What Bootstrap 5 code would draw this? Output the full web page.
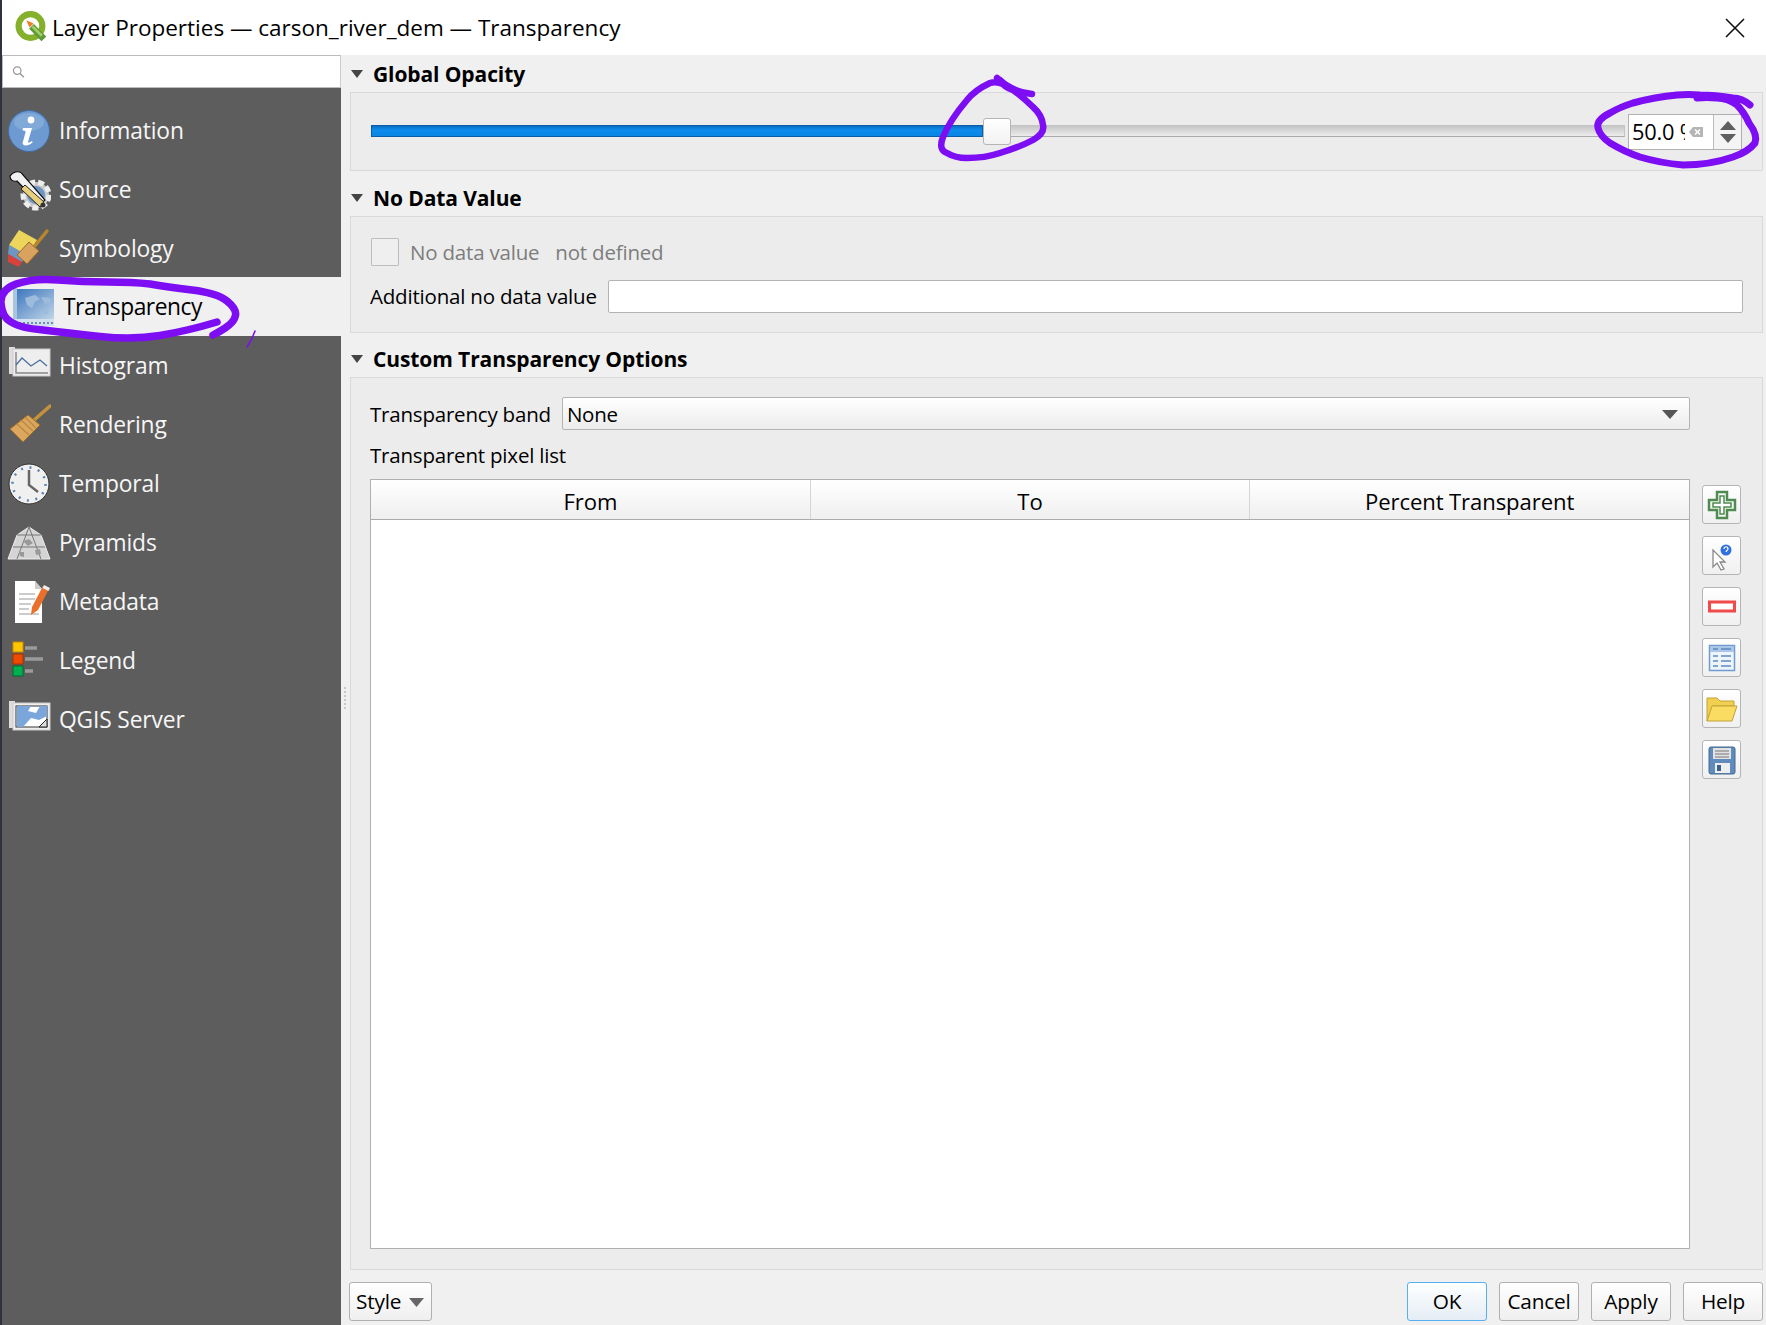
<!DOCTYPE html>
<html lang="en"><head><meta charset="utf-8"><title>Layer Properties</title>
<link href="https://cdn.jsdelivr.net/npm/bootstrap@5.3.0/dist/css/bootstrap.min.css" rel="stylesheet">
<style>
html,body{height:100%}
body{width:1766px;height:1325px;overflow:hidden;background:#f0f0f0;font-family:"Open Sans","Noto Sans",sans-serif;font-size:20.5px;letter-spacing:-.2px;color:#000;position:relative}
.titlebar{height:55px;background:#fff;border-left:2px solid #2f3340;padding-left:13px;flex:none}
.titletext{margin-left:4px;font-size:22.5px;letter-spacing:0;white-space:nowrap}
.main-area{flex:1;min-height:0;border-left:2px solid #2f3340}
.sidebar{width:339px;flex:none;background:#5d5d5d}
.searchbox{height:33px;background:#fff;border:1px solid #bbb;border-right-color:#ccc;padding-left:9px;flex:none}
.searchbox input{border:0;outline:0;padding:0;height:30px;box-shadow:none;background:transparent}
.navlist{padding-top:13px;border-radius:0}
.navlist .list-group-item{height:59px;background:transparent;border:0;border-radius:0;color:#f6f6f6;padding:2px 0 0 5px;display:flex;align-items:center;font-size:22.8px;letter-spacing:-.15px}
.navlist .list-group-item svg{flex:none;margin-right:8px;margin-top:-2px}
.navlist .list-group-item.active{background:#f0f0f0;color:#000;padding-left:9px;letter-spacing:-.45px}
.navlist .list-group-item.active svg{margin-right:8px}
.panel{flex:1;min-width:0;padding:1px 3px 4px 9px;position:relative}
.splitdots{position:absolute;left:3px;top:632px;width:2px;height:24px;background:repeating-linear-gradient(#c8c8c8 0 2px,transparent 2px 4px)}
.sechead{height:36px;font-weight:700;font-size:21px;letter-spacing:-.1px;flex:none;padding-top:2px}
.sechead svg{margin-right:10px;margin-left:1px;margin-top:-2px}
.gbox{background:#ececec;border:1px solid #d9d9d9;flex:none}
.box-opacity{height:79px;padding:0 20px;margin-bottom:9px}
.box-nodata{height:117px;padding:21px 19px 19px;margin-bottom:8px}
.box-custom{flex:1;min-height:0;padding:19px 19px 20px;margin-bottom:12px}
.fill{width:612px;height:12px;background:linear-gradient(#0a6fc4,#0c8cec 40%,#0a86e4);border:1px solid #0a5ea8;flex:none;margin-top:-2px}
.knob{width:28px;height:27px;background:linear-gradient(#fff,#f2f2f2);border:1px solid #b5b5b5;border-radius:3px;flex:none}
.rest{flex:1;height:12px;background:linear-gradient(#c6c6c6,#ececec);border:1px solid #c4c4c4;border-bottom-color:#aaa;border-left:0;margin-right:3px;margin-top:-2px}
.spin{width:114px;height:36px;background:#fff;border:1px solid #b0b0b0;flex:none}
.spin-val{width:53px;margin-left:3px;padding-top:2px;overflow:hidden;white-space:nowrap;font-size:21.8px;letter-spacing:-.2px}
.spin-arrows{width:28px;height:100%;border-left:1px solid #bbb;background:#f4f4f4;margin-left:auto}
.ck{width:28px;height:28px;margin:0 11px 0 1px;background:#efefef;border:1px solid #bdbdbd;border-radius:1px;flex:none}
.disabled-text{color:#7d7d7d}
.r-nodata{height:28px;gap:0}
.r-add{margin-top:14px;height:33px}
.lift{padding-top:1px}
.lineinput{flex:1;height:33px;border:1px solid #b4b4b4;border-radius:2px;background:#fff;box-shadow:none;padding:0 4px;margin-left:11px}
.r-add span{margin-top:-2px}
.r-band{height:33px;width:1320px}
.combo{flex:1;height:33px;border:1px solid #b4b4b4;border-radius:2px;background:linear-gradient(#fff,#ececec);padding:1px 11px 0 4px;margin-left:11px}
.listlabel{height:32px;margin:8px 0 9px;padding-top:2px}
.tblframe{width:1320px;flex:none;background:#fff;border:1px solid #b0b0b0}
.tblframe table{table-layout:fixed;margin:0;--bs-table-bg:transparent}
.tblframe th{height:39px;padding:5px 0 0;text-align:center;vertical-align:middle;font-weight:400;background:linear-gradient(#fff,#efefef);border:0;border-right:1px solid #d5d5d5;border-bottom:1px solid #aaa;color:#000;font-size:22.1px;letter-spacing:-.1px}
.tblframe th:last-child{border-right:0}
.tools{width:40px;margin-left:12px;margin-top:6px;flex:none;gap:12px}
.toolbtn{width:39px;height:39px;padding:0;background:linear-gradient(#fff,#f0f0f0);border:1px solid #b5b5b5;border-radius:3px;display:flex;align-items:center;justify-content:center}
.dlgbtn{width:80px;height:39px;padding:1px 0 0;font-size:20.8px;letter-spacing:-.2px;color:#000;background:linear-gradient(#fff,#efefef);border:1px solid #b0b0b0;border-radius:3px}
.dlgbtn.okbtn{border-color:#55aff0;background:linear-gradient(#fff,#e4edf5)}
.dlgbtn.stylebtn{width:83px;text-align:left;padding-left:6px;gap:8px;margin-left:-1px}
.btnrow{height:39px;flex:none;gap:12px}
.ink{position:absolute;left:0;top:0;pointer-events:none;z-index:5}
</style></head>
<body class="d-flex flex-column">
<div class="titlebar d-flex align-items-center">
<svg width="33" height="33" viewBox="0 0 32 32"><circle cx="15" cy="14.500" r="11.500" fill="none" stroke="#84b02c" stroke-width="6"/><path d="M16 15l12 12" stroke="#5f9a3a" stroke-width="6.500"/><path d="M17 15l9 9" stroke="#a4d062" stroke-width="2.500"/><path d="M11 9l7 3-4 4z" fill="#ef7d22"/></svg>
<span class="titletext">Layer Properties — carson_river_dem — Transparency</span>
<svg class="ms-auto" style="margin-right:21px" width="20" height="20" viewBox="0 0 20 20"><path d="M1 1l18 18M19 1L1 19" stroke="#111" stroke-width="1.6"/></svg>
</div>
<div class="main-area d-flex">
<div class="sidebar d-flex flex-column">
<div class="searchbox d-flex align-items-center gap-1">
<svg width="14" height="14" viewBox="0 0 14 14"><circle cx="5.5" cy="5.5" r="4" fill="none" stroke="#999" stroke-width="1.3"/><path d="M8.5 8.5l4 4" stroke="#999" stroke-width="1.6"/></svg>
<input class="form-control" type="text" aria-label="Search">
</div>
<div class="list-group navlist">
<div class="list-group-item">
<svg width="44" height="44" viewBox="0 0 44 44"><circle cx="22" cy="22" r="20.5" fill="#6d9bd1" stroke="#3f6ea8"/><ellipse cx="22" cy="13" rx="15" ry="9" fill="#8fb4de" opacity=".6"/><circle cx="24" cy="11" r="3.4" fill="#fff"/><path d="M16 19h9l-4 14c0 1 1 1 4-1l.6 1.500c-4 3.500-10 4-10 .5l3-11c0-1-1-1.500-3-1.500z" fill="#fff"/></svg>
Information</div>
<div class="list-group-item">
<svg width="44" height="44" viewBox="0 0 44 44"><circle cx="29" cy="27" r="13" fill="#c9c9c9" stroke="#eee" stroke-width="5" stroke-dasharray="6 3"/><circle cx="29" cy="27" r="9" fill="#6d96c4"/><path d="M3 8c5-6 11-5 13-1l22 25-5 5L10 13C6 14 3 12 3 8z" fill="#f1f1f1" stroke="#111" stroke-width="1.2"/><path d="M18 17l19 17-4 5-19-18z" fill="#e8cf79" stroke="#222"/><circle cx="36" cy="37" r="2.500" fill="#333"/></svg>
Source</div>
<div class="list-group-item">
<svg width="44" height="44" viewBox="0 0 44 44"><path d="M2 18L12 3l18 10-10 16z" fill="#edd45a"/><path d="M2 18l18 10-5 7L1 27z" fill="#6d96c4"/><path d="M1 27l14 8-3 5L1 35z" fill="#d8423a"/><path d="M27 20L40 4" stroke="#b8862d" stroke-width="3.500" stroke-linecap="round"/><path d="M10 28l12-13 10 9-12 13z" fill="#d9a25f" stroke="#9a6a27"/></svg>
Symbology</div>
<div class="list-group-item active">
<svg width="44" height="44" viewBox="0 0 44 44"><defs><linearGradient id="mapfade" x1="0" y1="0" x2="1" y2="1"><stop offset="0" stop-color="#3a74bd"/><stop offset="1" stop-color="#c0d5e8"/></linearGradient></defs><rect x="4" y="4" width="39" height="30" fill="url(#mapfade)"/><path d="M2 3h4v33H2z" fill="#a9c4dd"/><path d="M14 13l10-3 5 4-5 3-3 6-5-3zM30 12l9 1 1 5-6 1zM32 25l6 1-2 4-4-2z" fill="#9dbcdc"/><rect x="2" y="34" width="41" height="7" fill="#d3e1ee"/><path d="M4 38h39" stroke="#6f8faf" stroke-width="2" stroke-dasharray="2 2"/></svg>
Transparency</div>
<div class="list-group-item">
<svg width="44" height="44" viewBox="0 0 44 44"><path d="M2 3h6v27H2z" fill="#ddd"/><rect x="6" y="5" width="37" height="27" fill="#eee" stroke="#ccc"/><path d="M9 8v21h32" fill="none" stroke="#888" stroke-width="1.500"/><path d="M9 21l6-7 9 8 9-6 7 6" fill="none" stroke="#4a6f9e" stroke-width="1.300"/></svg>
Histogram</div>
<div class="list-group-item">
<svg width="44" height="44" viewBox="0 0 44 44"><path d="M26 18L43 3" stroke="#c5913a" stroke-width="3.500" stroke-linecap="round"/><path d="M3 26l18-14 12 10-17 17z" fill="#dba75f" stroke="#a16f23"/><path d="M10 21l12 11M14 17l12 11M18 14l11 11" stroke="#b98741" stroke-width="1.200"/></svg>
Rendering</div>
<div class="list-group-item">
<svg width="44" height="44" viewBox="0 0 44 44"><circle cx="22" cy="22" r="20" fill="#f0f0f0" stroke="#333" stroke-width="1"/><circle cx="22" cy="22" r="16.500" fill="none" stroke="#5a82b5" stroke-width="2.500" stroke-dasharray="2 6.640"/><path d="M22 8v15l9 7" fill="none" stroke="#666" stroke-width="2.500"/></svg>
Temporal</div>
<div class="list-group-item">
<svg width="44" height="44" viewBox="0 0 44 44"><path d="M1 38L10 14 22 6l12 8 9 24z" fill="#d4d4d4" stroke="#eee"/><path d="M22 6L10 38M22 6l12 32M10 14h24M6 26h32" stroke="#777" stroke-width="1" fill="none"/><path d="M16 20l6-2 4 4-5 3zM12 31l5 0 0 5-4-1zM28 29l5-1 1 5-5 1z" fill="#999"/></svg>
Pyramids</div>
<div class="list-group-item">
<svg width="44" height="44" viewBox="0 0 44 44"><path d="M8 1h20l7 8v34H8z" fill="#fff"/><path d="M28 1l7 8h-7z" fill="#ccc"/><path d="M12 14h16M12 19h16M12 24h12M12 29h10M12 34h20" stroke="#999" stroke-width="1.200"/><path d="M36 6l6 3-11 21-7 5 1-8z" fill="#e8702a"/><path d="M37 5l6 3-1.500 3-6-3z" fill="#eee"/></svg>
Metadata</div>
<div class="list-group-item">
<svg width="44" height="44" viewBox="0 0 44 44"><rect x="6" y="3" width="10" height="10" fill="#ffc600" stroke="#c98a00"/><rect x="6" y="15" width="10" height="10" fill="#f04a00" stroke="#a83000"/><rect x="6" y="27" width="10" height="10" fill="#00b050" stroke="#006b30"/><path d="M18 9h12M18 20h18M18 32h8" stroke="#9a9a9a" stroke-width="3.500"/></svg>
Legend</div>
<div class="list-group-item">
<svg width="44" height="44" viewBox="0 0 44 44"><path d="M2 3h6v27H2z" fill="#ddd"/><rect x="6" y="5" width="37" height="27" fill="#eee" stroke="#ccc"/><rect x="9" y="8" width="31" height="21" fill="#fff" stroke="#333" stroke-width="1"/><path d="M10 8h14l-3 5 8 2 4-7h7v10l-8 4-8-2-8 9h-6z" fill="#7ba6dc"/><path d="M32 29l8-8v8z" fill="#ddd" stroke="#222"/></svg>
QGIS Server</div>
</div>
</div>
<div class="panel d-flex flex-column">
<div class="splitdots"></div>
<div class="sechead d-flex align-items-center"><svg width="12" height="8" viewBox="0 0 12 8"><path d="M0 0h12L6 8z" fill="#444"/></svg>Global Opacity</div>
<div class="gbox box-opacity d-flex align-items-center">
<div class="fill"></div><div class="knob"></div><div class="rest"></div>
<div class="spin d-flex align-items-center">
<span class="spin-val">50.0 %</span>
<svg width="14" height="12" viewBox="0 0 14 12" class="ms-1"><path d="M0 6l4-5h10v10H4z" fill="#b5b5b5"/><path d="M6 3.500l5 5M11 3.500l-5 5" stroke="#fff" stroke-width="1.500"/></svg>
<div class="spin-arrows d-flex flex-column align-items-center justify-content-center gap-1">
<svg width="16" height="9" viewBox="0 0 16 9"><path d="M8 0l8 9H0z" fill="#5f5f5f"/></svg>
<svg width="16" height="9" viewBox="0 0 16 9"><path d="M0 0h16L8 9z" fill="#5f5f5f"/></svg>
</div></div></div>
<div class="sechead d-flex align-items-center"><svg width="12" height="8" viewBox="0 0 12 8"><path d="M0 0h12L6 8z" fill="#444"/></svg>No Data Value</div>
<div class="gbox box-nodata">
<div class="r-nodata d-flex align-items-center disabled-text"><span class="ck"></span><span class="lift">No data value</span><span class="ms-3 lift">not defined</span></div>
<div class="r-add d-flex align-items-center"><span class="lift">Additional no data value</span><input class="form-control lineinput" type="text" aria-label="Additional no data value"></div>
</div>
<div class="sechead d-flex align-items-center"><svg width="12" height="8" viewBox="0 0 12 8"><path d="M0 0h12L6 8z" fill="#444"/></svg>Custom Transparency Options</div>
<div class="gbox box-custom d-flex flex-column">
<div class="r-band d-flex align-items-center"><span class="lift">Transparency band</span><div class="combo d-flex align-items-center justify-content-between"><span>None</span><svg width="16" height="9" viewBox="0 0 16 9"><path d="M0 0h16L8 9z" fill="#555"/></svg></div></div>
<div class="listlabel d-flex align-items-center">Transparent pixel list</div>
<div class="d-flex flex-grow-1">
<div class="tblframe"><table class="table"><thead><tr><th>From</th><th>To</th><th>Percent Transparent</th></tr></thead></table></div>
<div class="tools d-flex flex-column">
<button class="btn toolbtn" aria-label="Add"><svg width="30" height="30" viewBox="0 0 30 30"><path d="M10 2h10v8h8v10h-8v8H10v-8H2V10h8z" fill="#f4f8f4" stroke="#4f8a50" stroke-width="2.500"/><path d="M13 6h4v7h7v4h-7v7h-4v-7H6v-4h7z" fill="#fff" stroke="#4f8a50" stroke-width="1.500"/></svg></button>
<button class="btn toolbtn" aria-label="Pick"><svg width="30" height="30" viewBox="0 0 30 30"><path d="M6 9v17l4-4 4 7 3-1-4-7h5z" fill="#fff" stroke="#888" stroke-width="1.300"/><circle cx="19" cy="9" r="5.500" fill="#2f6fe0"/><path d="M17 8c0-3 4-3 4 0 0 1-2 1.500-2 3" fill="none" stroke="#fff" stroke-width="1.200"/></svg></button>
<button class="btn toolbtn" aria-label="Remove"><svg width="30" height="30" viewBox="0 0 30 30"><rect x="2.500" y="10" width="25" height="9" fill="#fff" stroke="#f04a4a" stroke-width="3"/></svg></button>
<button class="btn toolbtn" aria-label="Default"><svg width="30" height="30" viewBox="0 0 30 30"><rect x="2.500" y="2.500" width="25" height="25" fill="#eef4fb" stroke="#6f9bce" stroke-width="1.500"/><rect x="3" y="3" width="24" height="6" fill="#a9c6e6"/><path d="M6 6h5M14 6h10M6 13h5M14 13h10M6 18h5M14 18h10M6 23h5M14 23h10" stroke="#5f8bbf" stroke-width="1.500"/></svg></button>
<button class="btn toolbtn" aria-label="Open"><svg width="32" height="28" viewBox="0 0 32 28"><path d="M1 26V3h10l3 3h14v5H7L1 26z" fill="#f2d04f" stroke="#c0a23a"/><path d="M6 11h25l-5 15H1z" fill="#fbdc62" stroke="#c0a23a"/></svg></button>
<button class="btn toolbtn" aria-label="Save"><svg width="30" height="30" viewBox="0 0 30 30"><rect x="2" y="2" width="26" height="27" rx="2" fill="#5f8cbc" stroke="#44698f"/><rect x="6" y="3" width="18" height="11" fill="#e2e2e2"/><path d="M8 6h14M8 9h14M8 12h14" stroke="#777"/><rect x="8" y="18" width="15" height="10" fill="#eee"/><rect x="10" y="20" width="4" height="6" fill="#3b628c"/></svg></button>
</div></div></div>
<div class="btnrow d-flex">
<button class="btn dlgbtn stylebtn d-flex align-items-center me-auto">Style<svg width="15" height="9" viewBox="0 0 15 9"><path d="M0 0h15L7.500 9z" fill="#666"/></svg></button>
<button class="btn dlgbtn okbtn">OK</button><button class="btn dlgbtn">Cancel</button><button class="btn dlgbtn">Apply</button><button class="btn dlgbtn">Help</button>
</div>
</div>
</div>
<svg class="ink" width="1766" height="1325" viewBox="0 0 1766 1325" fill="none" stroke="#7d0df2" stroke-linecap="round" stroke-linejoin="round">
<path stroke-width="7.500" d="M217 322Q187 331 160 335.500Q133 340 100 336.500Q67 333 43 330Q20 328 11 322Q2 317 1 303Q0 290 16 284Q33 278 58 280Q83 282 108 282Q133 282 150 284Q167 287 192 290Q217 293 227 301Q238 310 235 317Q233 325 213 335"/>
<path stroke-width="1.500" d="M255 331Q252 340 247 347"/>
<path stroke-width="6.500" d="M1032 94Q1012 92 997 78Q1005 88 1013 90Q1000 80 990 83Q975 90 967 100Q950 120 943 137Q938 150 947 153Q955 158 967 158Q985 158 1000 153Q1020 147 1033 140Q1045 133 1043 125Q1042 115 1033 107Q1023 97 1013 90Q1005 85 1000 80"/>
<path stroke-width="7" d="M1750 105Q1742 98 1733 98Q1715 95 1700 95Q1688 94 1677 95Q1655 97 1633 103Q1620 107 1610 113Q1596 120 1598 128Q1600 136 1610 143Q1625 152 1640 157Q1660 163 1683 165Q1710 165 1733 157Q1748 152 1755 143Q1758 135 1749 123Q1744 112 1737 105Q1727 98 1717 98Q1707 97 1697 98"/>
</svg>
<script src="https://cdn.jsdelivr.net/npm/bootstrap@5.3.0/dist/js/bootstrap.bundle.min.js"></script>
</body></html>
